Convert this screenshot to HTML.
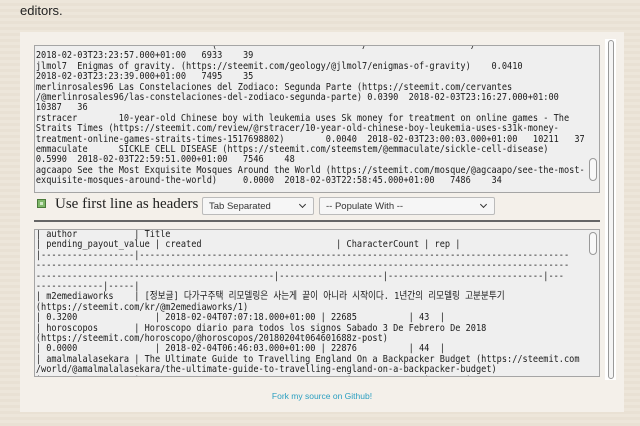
<!DOCTYPE html>
<html><head><style>
*{margin:0;padding:0;box-sizing:border-box}
body{width:640px;height:426px;overflow:hidden;background:repeating-linear-gradient(#ede6da 0 3px,#e9e1d4 3px 6px);font-family:"Liberation Sans",sans-serif;position:relative}
.ed{position:absolute;left:20px;top:3px;font-size:13px;color:#222}
.panel{position:absolute;left:20px;top:32px;width:604px;height:380px;background:#f4f0ea}
.osb{position:absolute;left:605px;top:39px;width:11px;height:341px;background:#fff}
.osb div{position:absolute;left:3px;top:1px;width:6px;height:339px;border:1px solid #999;border-radius:3px;background:#f4f4f4}
.ta{position:absolute;left:34px;width:566px;border:1px solid #a5a5a5;background:#efefef;overflow:hidden}
pre{font-family:"DejaVu Sans Mono","Liberation Mono","Noto Sans CJK KR",monospace;font-size:10px;line-height:10.4px;color:#1a1a1a;padding-left:1px;white-space:pre;transform:scaleX(0.86);transform-origin:0 0}
.sb{position:absolute;right:2px;width:8px;border:1px solid #999;border-radius:4px;background:#f8f8f8}
.cb{position:absolute;left:37px;top:199px;width:9px;height:9px;background:#7fb86a;border:1px solid #4a7a3a}
.cb:after{content:"";position:absolute;left:2px;top:2px;width:3px;height:3px;background:#cfe8c4;}
.lbl{position:absolute;left:55px;top:196px;font-family:"Liberation Serif",serif;font-size:15px;color:#222}
.sel{position:absolute;top:197px;height:18px;border:1px solid #bbb;border-radius:2px;background:#f6f6f6;font-size:9.5px;color:#333;padding:3px 6px}
.sel:after{content:"";position:absolute;right:8px;top:4px;width:4px;height:4px;border-right:1.5px solid #333;border-bottom:1.5px solid #333;transform:rotate(45deg)}
.hr{position:absolute;left:34px;top:220px;width:566px;height:2px;background:#666}
.foot{position:absolute;left:0;width:644px;top:391px;text-align:center;font-size:8.5px;color:#2a9ec0}
</style></head><body>
<div class="ed">editors.</div>
<div class="panel"></div>
<div class="osb"><div></div></div>
<div class="ta" style="top:45px;height:148px">
<pre style="margin-top:-5px">                                  (                            /                    /         
2018-02-03T23:23:57.000+01:00   6933    39
jlmol7  Enigmas of gravity. (https://steemit.com/geology/@jlmol7/enigmas-of-gravity)    0.0410
2018-02-03T23:23:39.000+01:00   7495    35
merlinrosales96 Las Constelaciones del Zodiaco: Segunda Parte (https://steemit.com/cervantes
/@merlinrosales96/las-constelaciones-del-zodiaco-segunda-parte) 0.0390  2018-02-03T23:16:27.000+01:00
10387   36
rstracer        10-year-old Chinese boy with leukemia uses Sk money for treatment on online games - The
Straits Times (https://steemit.com/review/@rstracer/10-year-old-chinese-boy-leukemia-uses-s31k-money-
treatment-online-games-straits-times-1517698802)        0.0040  2018-02-03T23:00:03.000+01:00   10211   37
emmaculate      SICKLE CELL DISEASE (https://steemit.com/steemstem/@emmaculate/sickle-cell-disease)
0.5990  2018-02-03T22:59:51.000+01:00   7546    48
agcaapo See the Most Exquisite Mosques Around the World (https://steemit.com/mosque/@agcaapo/see-the-most-
exquisite-mosques-around-the-world)     0.0000  2018-02-03T22:58:45.000+01:00   7486    34</pre>
<div class="sb" style="top:112px;height:23px"></div>
</div>
<div class="cb"></div>
<div class="lbl">Use first line as headers</div>
<div class="sel" style="left:202px;width:112px">Tab Separated</div>
<div class="sel" style="left:319px;width:176px">-- Populate With --</div>
<div class="hr"></div>
<div class="ta" style="top:229px;height:148px">
<pre style="margin-top:0px">| author           | Title
| pending_payout_value | created                          | CharacterCount | rep |
|------------------|-----------------------------------------------------------------------------------
-------------------------------------------------------------------------------------------------------
----------------------------------------------|--------------------|------------------------------|---
-------------|-----|
| m2emediaworks    | [정보글] 다가구주택 리모델링은 사는게 끝이 아니라 시작이다. 1년간의 리모델링 고분분투기
(https://steemit.com/kr/@m2emediaworks/1)
| 0.3200               | 2018-02-04T07:07:18.000+01:00 | 22685          | 43  |
| horoscopos       | Horoscopo diario para todos los signos Sabado 3 De Febrero De 2018
(https://steemit.com/horoscopo/@horoscopos/20180204t064601688z-post)
| 0.0000               | 2018-02-04T06:46:03.000+01:00 | 22876          | 44  |
| amalmalalasekara | The Ultimate Guide to Travelling England On a Backpacker Budget (https://steemit.com
/world/@amalmalalasekara/the-ultimate-guide-to-travelling-england-on-a-backpacker-budget)
|                  |                                        |              |       |</pre>
<div class="sb" style="top:2px;height:23px"></div>
</div>
<div class="foot">Fork my source on Github!</div>
</body></html>
